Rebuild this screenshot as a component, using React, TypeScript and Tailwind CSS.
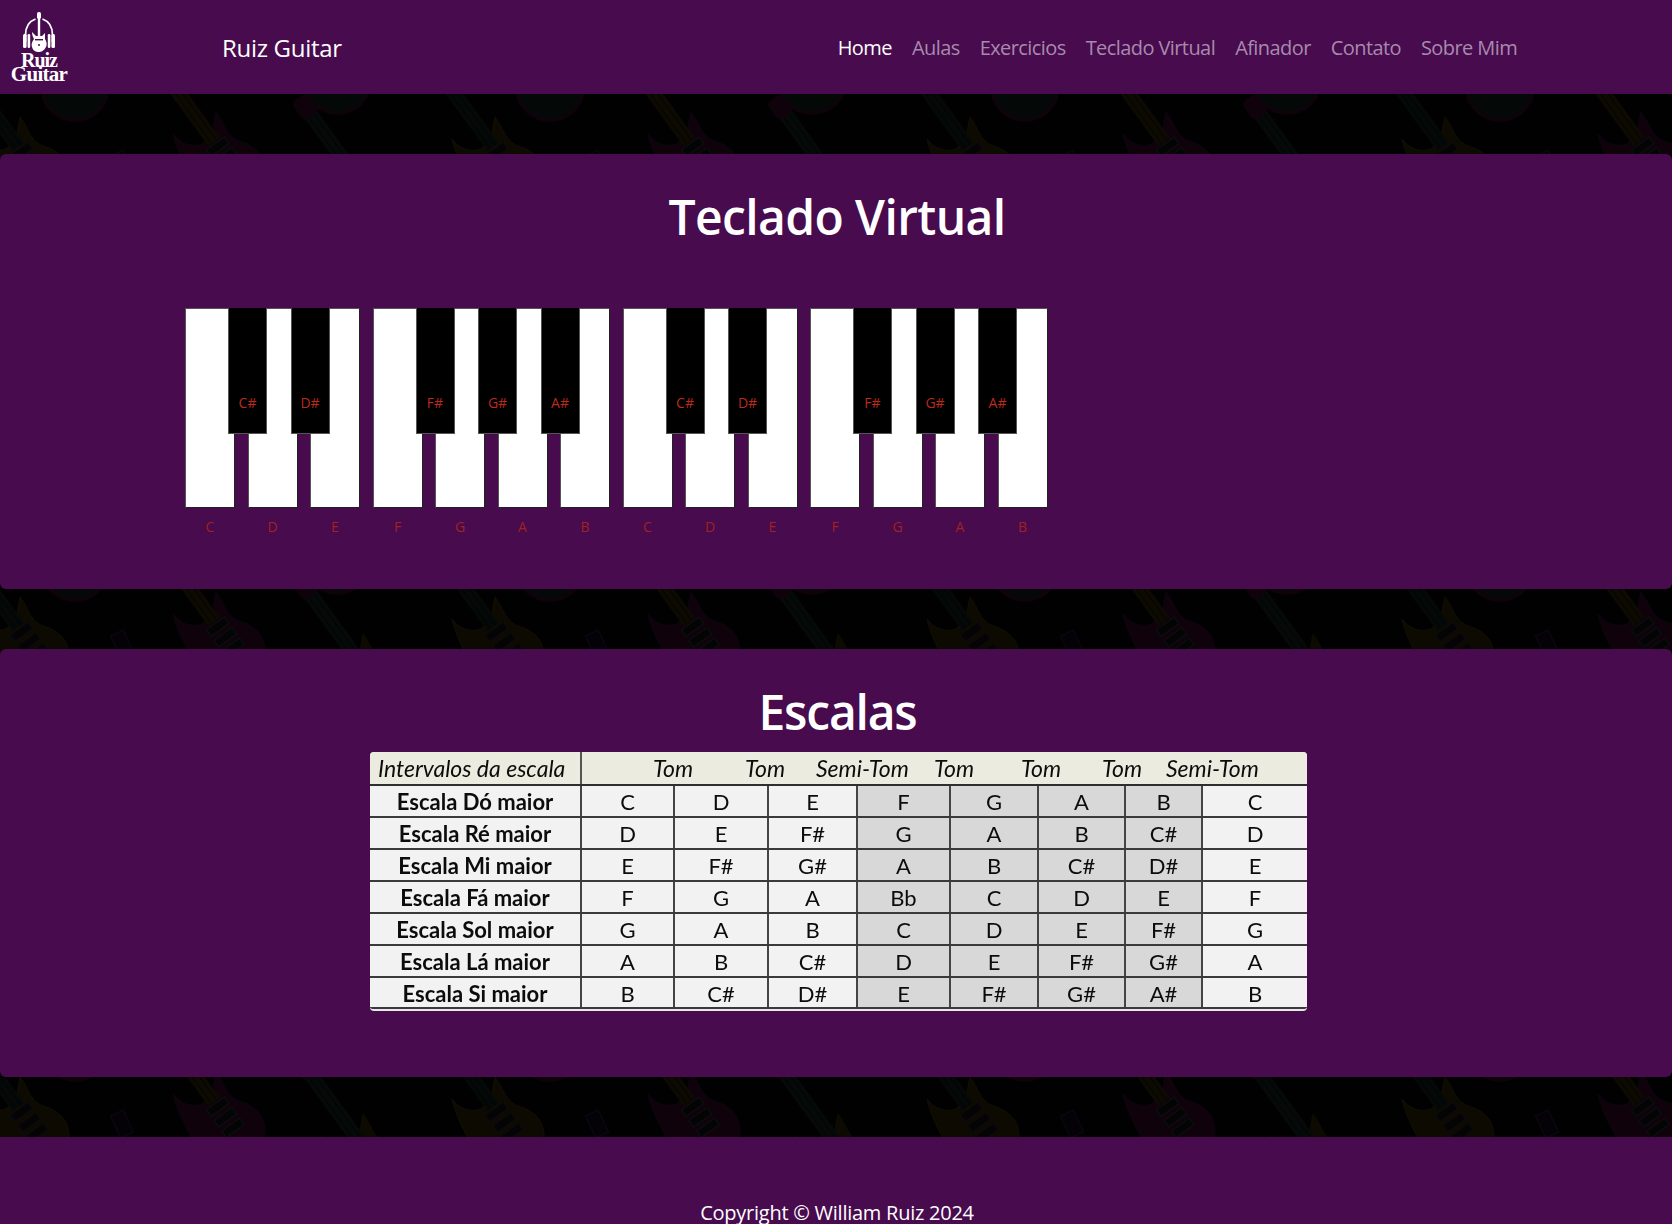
const NOTES = ["C", "D", "E", "F", "G", "A", "B", "C", "D", "E", "F", "G", "A", "B"];

type Row = [string, string[]];
const ROWS: Row[] = [
  ["Escala Dó maior", ["C", "D", "E", "F", "G", "A", "B", "C"]],
  ["Escala Ré maior", ["D", "E", "F#", "G", "A", "B", "C#", "D"]],
  ["Escala Mi maior", ["E", "F#", "G#", "A", "B", "C#", "D#", "E"]],
  ["Escala Fá maior", ["F", "G", "A", "Bb", "C", "D", "E", "F"]],
  ["Escala Sol maior", ["G", "A", "B", "C", "D", "E", "F#", "G"]],
  ["Escala Lá maior", ["A", "B", "C#", "D", "E", "F#", "G#", "A"]],
  ["Escala Si maior", ["B", "C#", "D#", "E", "F#", "G#", "A#", "B"]],
];

type GuitarProps = { x: number; y: number; body: string; edge: string; neck: string; pick: string; len: number; head?: string };

function Guitar({ x, y, body, edge, neck, pick, len, head }: GuitarProps) {
  return (
    <g transform={`translate(${x} ${y})`}>
      <path
        d="M-47 -16 C-40 -6 -28 -2 -18 -6 L-8 -16 C-6 -24 -6 -30 -4 -38 C6 -25 6 -12 22 -8 C40 -2 48 12 44 30 C40 50 20 60 0 60 C-15 60 -20 45 -25 35 C-32 20 -42 5 -47 -16 Z"
        fill={body}
        stroke={edge}
        strokeWidth="1"
      />
      <g transform="rotate(-36)">
        <rect x="-7" y={-10 - len} width="14" height={len} fill={neck} />
        <line x1="-3" y1={-10 - len} x2="-3" y2="-10" stroke="#000" strokeWidth="1" opacity="0.7" />
        <line x1="3" y1={-10 - len} x2="3" y2="-10" stroke="#000" strokeWidth="1" opacity="0.7" />
        {head ? <rect x="-9" y={-30 - len} width="18" height="22" rx="5" fill={head} /> : null}
        <rect x="-11" y="-8" width="22" height="8" fill="#060606" stroke={pick} strokeWidth="1" />
        <rect x="-11" y="5" width="22" height="8" fill="#060606" stroke={pick} strokeWidth="1" />
        <rect x="-11" y="18" width="22" height="8" fill="#060606" stroke={pick} strokeWidth="1" />
      </g>
    </g>
  );
}

function TileContent() {
  return (
    <>
      <ellipse cx="75" cy="88" rx="33" ry="32" fill="#050d0b" stroke="#18030f" strokeWidth="3" />
      <ellipse cx="337" cy="82" rx="33" ry="31" fill="#050d0b" stroke="#18030f" strokeWidth="3" />
      <Guitar x={24} y={155} body="#141000" edge="#1a1402" neck="#060e0b" pick="#150a18" len={150} />
      <Guitar x={220} y={150} body="#18020f" edge="#120418" neck="#131000" pick="#0b1a16" len={110} />
      <Guitar x={367} y={192} body="#141000" edge="#141000" neck="#08100c" pick="#0b1a16" len={86} head="#17030f" />
      <rect x="115" y="152" width="14" height="24" transform="rotate(-25 122 164)" fill="#050208" stroke="#100a20" strokeWidth="1" />
    </>
  );
}

function Background() {
  return (
    <svg className="absolute inset-0 h-full w-full" aria-hidden="true">
      <defs>
        <pattern id="guitars" x="0" y="0" width="475" height="480" patternUnits="userSpaceOnUse">
          <rect width="475" height="480" fill="#010102" />
          <g opacity="0.62">
            <TileContent />
            <g transform="translate(475 0)">
              <TileContent />
            </g>
            <g transform="translate(-475 0)">
              <TileContent />
            </g>
          </g>
        </pattern>
      </defs>
      <rect width="100%" height="100%" fill="url(#guitars)" />
    </svg>
  );
}

function Logo() {
  return (
    <div className="flex h-[72px] w-[58px] flex-col items-center text-white">
      <svg width="34" height="40" viewBox="0 0 34 40" fill="none" aria-hidden="true">
        <path d="M3.5 30 V23 C3.5 14 8 9 13.5 7" stroke="#fff" strokeWidth="1.8" />
        <path d="M30.5 30 V23 C30.5 14 26 9 20.5 7" stroke="#fff" strokeWidth="1.8" />
        <rect x="1" y="22" width="3.6" height="14" rx="1.5" fill="#fff" />
        <rect x="5.6" y="22" width="2.6" height="14" rx="1.2" fill="#fff" />
        <rect x="29.4" y="22" width="3.6" height="14" rx="1.5" fill="#fff" />
        <rect x="25.8" y="22" width="2.6" height="14" rx="1.2" fill="#fff" />
        <rect x="15.8" y="3" width="2.4" height="24" fill="#fff" />
        <rect x="15" y="0" width="4" height="7" rx="1.8" fill="#fff" />
        <path d="M10 20 L14 24 H20 L23 21 L23 27 C25 30 25 33 24 35 C22 39 19 40 17 40 C14 40 11 39 10 35 C9 32 10 30 12 27 C11 25 10 23 10 20 Z" fill="#fff" />
        <rect x="13" y="27" width="8" height="1.4" fill="#470b4e" />
        <circle cx="17" cy="33" r="1" fill="#470b4e" />
      </svg>
      <div className="mt-[1px] font-['Liberation_Serif',serif] text-[20px] leading-[14px] font-bold tracking-[-1px]">Ruiz</div>
      <div className="font-['Liberation_Serif',serif] text-[21px] leading-[14px] font-bold tracking-[-0.7px]">Guitar</div>
    </div>
  );
}

function Keyboard() {
  const blacks: Array<[number, string]> = [
    [0, "C#"], [1, "D#"], [3, "F#"], [4, "G#"], [5, "A#"],
    [7, "C#"], [8, "D#"], [10, "F#"], [11, "G#"], [12, "A#"],
  ];
  return (
    <div className="relative ml-[185px] mt-[60px] h-[200px] w-[864px]">
      <div className="flex h-[200px] items-start">
        {NOTES.map((n, i) => (
          <div key={i} className="mr-[12.5px] w-[50px] shrink-0">
            <div className="h-[200px] border border-[#555] border-r-[#222] border-b-[#222] bg-white" />
            <div className="mt-[9px] text-center text-[14px] leading-[20px] text-[#a02222]">{n}</div>
          </div>
        ))}
      </div>
      {blacks.map(([i, n], k) => (
        <div
          key={k}
          className="absolute top-0 flex h-[126px] w-[39px] items-end justify-center border-x border-b border-[#555] bg-black pb-[20px] text-[14px] leading-[20px] text-[#bc2a1c]"
          style={{ left: i * 62.5 + 43 }}
        >
          {n}
        </div>
      ))}
    </div>
  );
}

function ScaleTable() {
  const widths = ["w-[212px]", "w-[93px]", "w-[94px]", "w-[89px]", "w-[93px]", "w-[88px]", "w-[87px]", "w-[77px]", "w-[104px]"];
  return (
    <div className="ml-[370px] mt-[9px] w-[937px] overflow-hidden rounded-[4px] border-b-2 border-[#e8e8e8] bg-[#f2f2f2] font-['Lato',sans-serif] text-[#0c0c0c] blur-[0.3px]">
      <div className="flex h-[34px] border-b-[2px] border-[#2e2e2e] bg-[#ecebe0] text-[23px] italic leading-[32px]">
        <div className="w-[212px] shrink-0 whitespace-nowrap border-r-2 border-[#555] pl-[8px]">Intervalos da escala</div>
        <div className="relative flex-1">
          <span className="absolute left-[71px]">Tom</span>
          <span className="absolute left-[163px]">Tom</span>
          <span className="absolute left-[234px]">Semi-Tom</span>
          <span className="absolute left-[352px]">Tom</span>
          <span className="absolute left-[439px]">Tom</span>
          <span className="absolute left-[520px]">Tom</span>
          <span className="absolute left-[584px]">Semi-Tom</span>
        </div>
      </div>
      {ROWS.map(([name, cells], r) => (
        <div key={r} className="flex h-[32px] border-b-[2px] border-[#3a3a3a] text-[22px] leading-[31px] last:h-[31px]">
          <div className={`${widths[0]} shrink-0 border-r-2 border-[#444] text-center font-bold`}>{name}</div>
          {cells.map((c, i) => (
            <div
              key={i}
              className={`${widths[i + 1]} shrink-0 border-r-2 border-[#444] text-center last:border-r-0 ${i >= 3 && i <= 6 ? "bg-[#d8d8d8]" : ""}`}
            >
              {c}
            </div>
          ))}
        </div>
      ))}
    </div>
  );
}

export default function App() {
  const links = ["Aulas", "Exercicios", "Teclado Virtual", "Afinador", "Contato", "Sobre Mim"];
  return (
    <div className="relative h-[1224px] overflow-hidden font-['Open_Sans',sans-serif] text-white">
      <Background />
      <div className="relative flex h-full flex-col">
        <nav className="flex h-[94px] shrink-0 items-center bg-[#470b4e] pl-[10px] pt-[1px]">
          <Logo />
          <span className="ml-[154px] text-[24px] tracking-[-0.3px]">Ruiz Guitar</span>
          <ul className="ml-[496px] flex gap-[20px] text-[20px] tracking-[-0.58px] text-[#a88aae]">
            <li className="text-white">Home</li>
            {links.map((l) => (
              <li key={l}>{l}</li>
            ))}
          </ul>
        </nav>
        <section className="mt-[60px] h-[435px] shrink-0 rounded-[6px] bg-[#470b4e]">
          <h1 className="pl-[2px] pt-[32px] text-center text-[48px] leading-[62px] font-semibold tracking-[-0.6px]">Teclado Virtual</h1>
          <Keyboard />
        </section>
        <section className="mt-[60px] h-[428px] shrink-0 rounded-[6px] bg-[#470b4e]">
          <h1 className="pl-[3px] pt-[32px] text-center text-[48px] leading-[62px] font-semibold tracking-[-1.2px]">Escalas</h1>
          <ScaleTable />
        </section>
        <footer className="mt-[60px] flex-1 bg-[#470b4e] pt-[64px] pl-[2px] text-center text-[20px] leading-[23px] tracking-[-0.25px]">
          Copyright © William Ruiz 2024
        </footer>
      </div>
    </div>
  );
}
